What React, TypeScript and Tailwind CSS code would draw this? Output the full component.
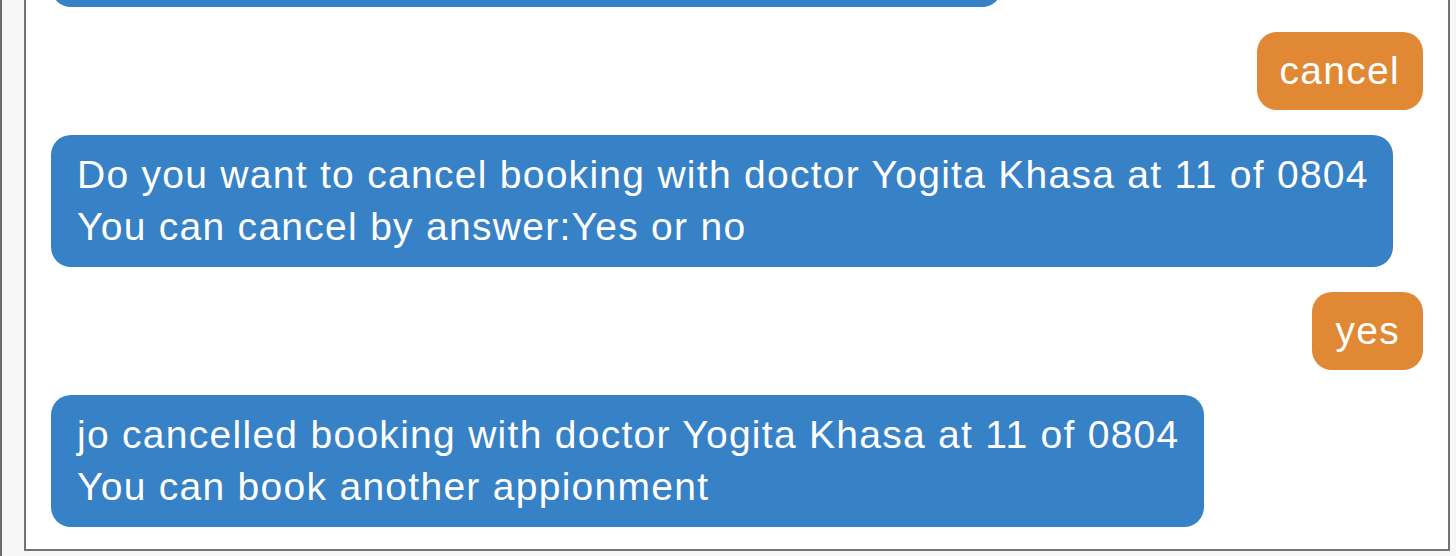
import React from 'react';

type Msg = { from: 'bot' | 'user'; lines: string[] };

const messages: Msg[] = [
  {
    from: 'bot',
    lines: ['jo cancelled booking with doctor Yogita Khasa at 11 of 0804', 'You can book another appionment'],
  },
  { from: 'user', lines: ['cancel'] },
  {
    from: 'bot',
    lines: ['Do you want to cancel booking with doctor Yogita Khasa at 11 of 0804', 'You can cancel by answer:Yes or no'],
  },
  { from: 'user', lines: ['yes'] },
  {
    from: 'bot',
    lines: ['jo cancelled booking with doctor Yogita Khasa at 11 of 0804', 'You can book another appionment'],
  },
];

function Bubble({ msg, clipped }: { msg: Msg; clipped?: boolean }) {
  const isUser = msg.from === 'user';
  // the first message is scrolled up out of view, only its lower edge shows
  if (clipped) {
    return (
      <div className="flex justify-start shrink-0">
        <div className="w-[951px] h-[132px] rounded-[20px] bg-[#3781c6]" />
      </div>
    );
  }
  return (
    <div className={`flex shrink-0 ${isUser ? 'justify-end' : 'justify-start'}`}>
      <div
        className={`rounded-[20px] text-white text-[39px] leading-[52px] tracking-[1.28px] whitespace-nowrap ${
          isUser ? 'bg-[#e18834] px-[23px] py-[13px]' : 'bg-[#3781c6] pl-[26px] pr-[24px] py-[14px]'
        }`}
      >
        {msg.lines.map((line, i) => (
          <div key={i}>{line}</div>
        ))}
      </div>
    </div>
  );
}

export default function App() {
  return (
    <div
      className="h-[556px] w-[1456px] overflow-hidden bg-[#f7f7f7] border-l-2 border-[#6b6b6b]"
      style={{ fontFamily: '"Liberation Sans", Arial, sans-serif' }}
    >
      <div className="ml-[22px] w-[1426px] h-[551px] bg-white border-x-2 border-b-2 border-[#737373] overflow-hidden flex flex-col justify-end gap-[25px] px-[25px] pb-[22px]">
        {messages.map((m, i) => (
          <Bubble key={i} msg={m} clipped={i === 0} />
        ))}
      </div>
    </div>
  );
}
